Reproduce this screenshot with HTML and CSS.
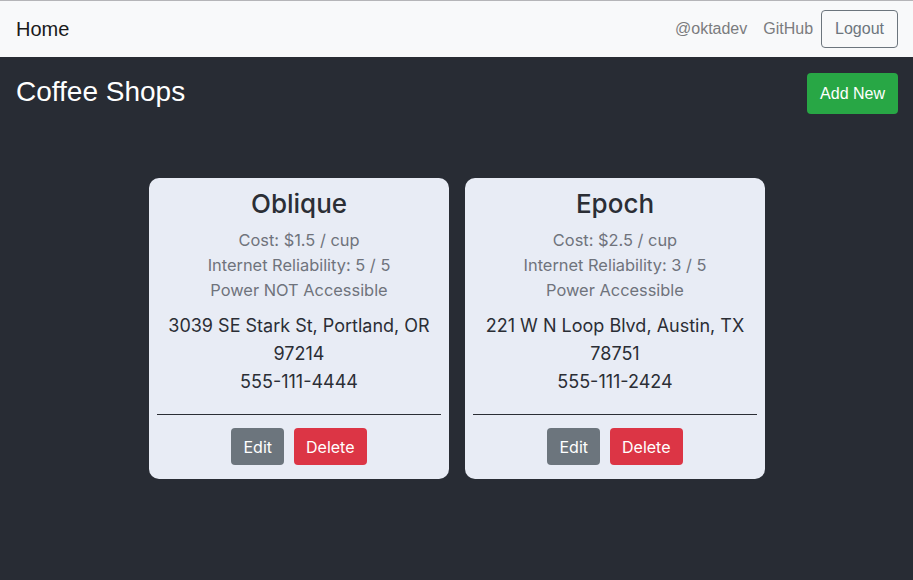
FILE: index.html
```html
<!DOCTYPE html>
<html>
<head>
<meta charset="utf-8">
<link rel="stylesheet" href="styles.css">
</head>
<body>
<nav class="navbar">
  <a class="brand">Home</a>
  <div class="nav-right">
    <a class="nav-link">@oktadev</a>
    <a class="nav-link">GitHub</a>
    <button class="btn-outline">Logout</button>
  </div>
</nav>
<main class="main">
  <div class="header">
    <h2 class="title">Coffee Shops</h2>
    <button class="btn btn-green">Add New</button>
  </div>
  <div class="cards">
    <div class="card">
      <h3 class="card-title">Oblique</h3>
      <div class="meta">Cost: $1.5 / cup</div>
      <div class="meta">Internet Reliability: 5 / 5</div>
      <div class="meta">Power NOT Accessible</div>
      <div class="addr">3039 SE Stark St, Portland, OR 97214</div>
      <div class="addr">555-111-4444</div>
      <hr class="rule">
      <div class="actions">
        <button class="btn btn-gray">Edit</button>
        <button class="btn btn-red">Delete</button>
      </div>
    </div>
    <div class="card">
      <h3 class="card-title">Epoch</h3>
      <div class="meta">Cost: $2.5 / cup</div>
      <div class="meta">Internet Reliability: 3 / 5</div>
      <div class="meta">Power Accessible</div>
      <div class="addr">221 W N Loop Blvd, Austin, TX 78751</div>
      <div class="addr">555-111-2424</div>
      <hr class="rule">
      <div class="actions">
        <button class="btn btn-gray">Edit</button>
        <button class="btn btn-red">Delete</button>
      </div>
    </div>
  </div>
</main>
</body>
</html>
```
FILE: styles.css
```css
* { box-sizing: border-box; }
html, body { margin: 0; padding: 0; height: 100%; }
body {
  background: #282c34;
  font-family: "Liberation Sans", Arial, sans-serif;
}
.navbar {
  height: 57px;
  background: #f8f9fa;
  border-top: 1px solid #b5b5b8;
  display: flex;
  align-items: center;
  justify-content: space-between;
  padding: 0 15px 0 16px;
}
.brand {
  font-size: 20px;
  color: #1a1a1a;
}
.nav-right {
  display: flex;
  align-items: center;
}
.nav-link {
  font-size: 16px;
  color: #7b7c7e;
  margin-right: 16px;
}
.nav-link + .nav-link { margin-right: 8px; }
.btn-outline {
  font-family: inherit;
  font-size: 16px;
  color: #6c757d;
  background: transparent;
  border: 1px solid #6c757d;
  border-radius: 4px;
  height: 38px;
  padding: 0 13px;
}
.main {
  padding: 16px 15px 0 16px;
}
.header {
  display: flex;
  justify-content: space-between;
  align-items: flex-start;
}
.title {
  margin: 3px 0 0;
  font-size: 28px;
  font-weight: 400;
  color: #fff;
}
.btn {
  font-family: "Liberation Sans", Arial, sans-serif;
  font-size: 16px;
  color: #fff;
  border: none;
  border-radius: 4px;
  height: 38px;
  padding: 0 12px;
}
.btn-green { background: #28a745; height: 41px; padding: 0 13px; }
.cards {
  display: flex;
  justify-content: center;
  gap: 16px;
  margin-top: 64px;
}
.card {
  width: 300px;
  background: #e8ecf5;
  border-radius: 10px;
  padding: 10px 8px 14px;
  text-align: center;
  font-family: Inter, "Noto Sans", sans-serif;
}
.card-title {
  margin: 0 0 8px;
  font-size: 26px;
  font-weight: 500;
  line-height: 32px;
  color: #2b2e35;
}
.meta {
  font-size: 16.4px;
  line-height: 25px;
  color: #6f737c;
}
.meta + .addr { margin-top: 9px; }
.addr {
  font-size: 18px;
  line-height: 28px;
  color: #2b2e35;
}
.rule {
  margin: 18px 0 13px;
  border: 0;
  border-top: 1px solid #2b2e35;
}
.actions {
  display: flex;
  justify-content: center;
  gap: 10px;
}
.btn-gray { background: #6c757d; height: 37px; }
.btn-red { background: #dc3545; height: 37px; }
.card .btn { font-family: Inter, "Noto Sans", sans-serif; }
```
